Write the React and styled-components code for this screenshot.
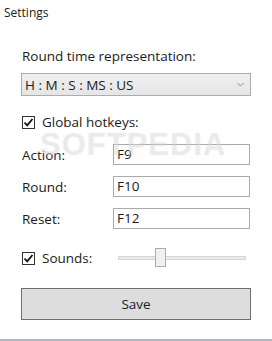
import React from "react";
import styled, { createGlobalStyle } from "styled-components";

const Global = createGlobalStyle`
  html, body { margin: 0; padding: 0; background: #ffffff; }
  * { box-sizing: border-box; }
`;

const Window = styled.div`
  position: relative;
  width: 272px;
  height: 341px;
  background: #ffffff;
  border-bottom: 2px solid #aeb6bf;
  font-family: "Open Sans", "Noto Sans", sans-serif;
  color: #1b1b1b;
  overflow: hidden;
`;

const Title = styled.div`
  margin: 5px 0 0 4px;
  font-size: 12px;
  line-height: 16px;
`;

const Content = styled.div`
  width: 230px;
  margin-left: 21px;
  display: flex;
  flex-direction: column;
`;

const Label = styled.div`
  font-size: 13.5px;
  line-height: 18px;
  margin-top: ${(p) => p.$mt || 0}px;
  padding-left: 1px;
`;

const Select = styled.div`
  margin-top: 8px;
  height: 23px;
  border: 1px solid #acacac;
  background: linear-gradient(#f0f0f0, #e5e5e5);
  display: flex;
  align-items: center;
  justify-content: space-between;
  padding: 0 6px 0 3px;
  font-size: 13.5px;
`;

const CheckRow = styled.div`
  display: flex;
  align-items: center;
  height: 20px;
  margin-top: ${(p) => p.$mt}px;
`;

const Box = styled.span`
  width: 13px;
  height: 13px;
  border: 1px solid #333333;
  background: #ffffff;
  display: inline-flex;
  align-items: center;
  justify-content: center;
  margin-left: 1px;
  margin-right: 7px;
  flex: none;
`;

const CheckText = styled.span`
  font-size: 13.5px;
  line-height: 18px;
  width: ${(p) => (p.$w ? `${p.$w}px` : "auto")};
  flex: none;
`;

const Grid = styled.div`
  margin-top: 12px;
  display: grid;
  grid-template-columns: 92px 137px;
  row-gap: 11px;
  align-items: center;
`;

const Input = styled.div`
  height: 21px;
  border: 1px solid #ababab;
  background: #ffffff;
  font-size: 13.5px;
  line-height: 19px;
  padding-left: 3px;
`;

const Slider = styled.div`
  position: relative;
  width: 128px;
  height: 20px;
  display: flex;
  align-items: center;
`;

const Track = styled.div`
  width: 100%;
  height: 4px;
  background: #e7eaea;
  border: 1px solid #d6d6d6;
`;

const Thumb = styled.div`
  position: absolute;
  top: 0;
  width: 11px;
  height: 19px;
  background: #f0f0f0;
  border: 1px solid #acacac;
`;

const Button = styled.div`
  margin-top: 20px;
  height: 32px;
  border: 1px solid #707070;
  background: #dddddd;
  display: flex;
  align-items: center;
  justify-content: center;
  font-size: 13.5px;
`;

const Watermark = styled.div`
  position: absolute;
  left: 40px;
  top: 127px;
  font-family: "Liberation Sans", sans-serif;
  font-weight: bold;
  font-size: 31px;
  letter-spacing: 1px;
  color: rgba(255, 255, 255, 0.3);
  text-shadow: 0 0 1px rgba(160, 160, 160, 0.3);
  pointer-events: none;
`;

function Check() {
  return (
    <Box>
      <svg width="11" height="11" viewBox="0 0 11 11">
        <path d="M1.5 5.5 L4.2 8.3 L9.5 2" fill="none" stroke="#111" strokeWidth="1.8" />
      </svg>
    </Box>
  );
}

export default function App() {
  return (
    <>
      <Global />
      <Window>
        <Title>Settings</Title>
        <Content>
          <Label $mt={26}>Round time representation:</Label>
          <Select>
            <span>H : M : S : MS : US</span>
            <svg width="7" height="5" viewBox="0 0 7 5">
              <path d="M0.5 1 L3.5 4 L6.5 1" fill="none" stroke="#8a8a8a" strokeWidth="1" />
            </svg>
          </Select>
          <CheckRow $mt={16}>
            <Check />
            <CheckText>Global hotkeys:</CheckText>
          </CheckRow>
          <Grid>
            <Label>Action:</Label>
            <Input>F9</Input>
            <Label>Round:</Label>
            <Input>F10</Input>
            <Label>Reset:</Label>
            <Input>F12</Input>
          </Grid>
          <CheckRow $mt={19}>
            <Check />
            <CheckText $w={76}>Sounds:</CheckText>
            <Slider>
              <Track />
              <Thumb style={{ left: 37 }} />
            </Slider>
          </CheckRow>
          <Button>Save</Button>
        </Content>
        <Watermark>SOFTPEDIA</Watermark>
      </Window>
    </>
  );
}
